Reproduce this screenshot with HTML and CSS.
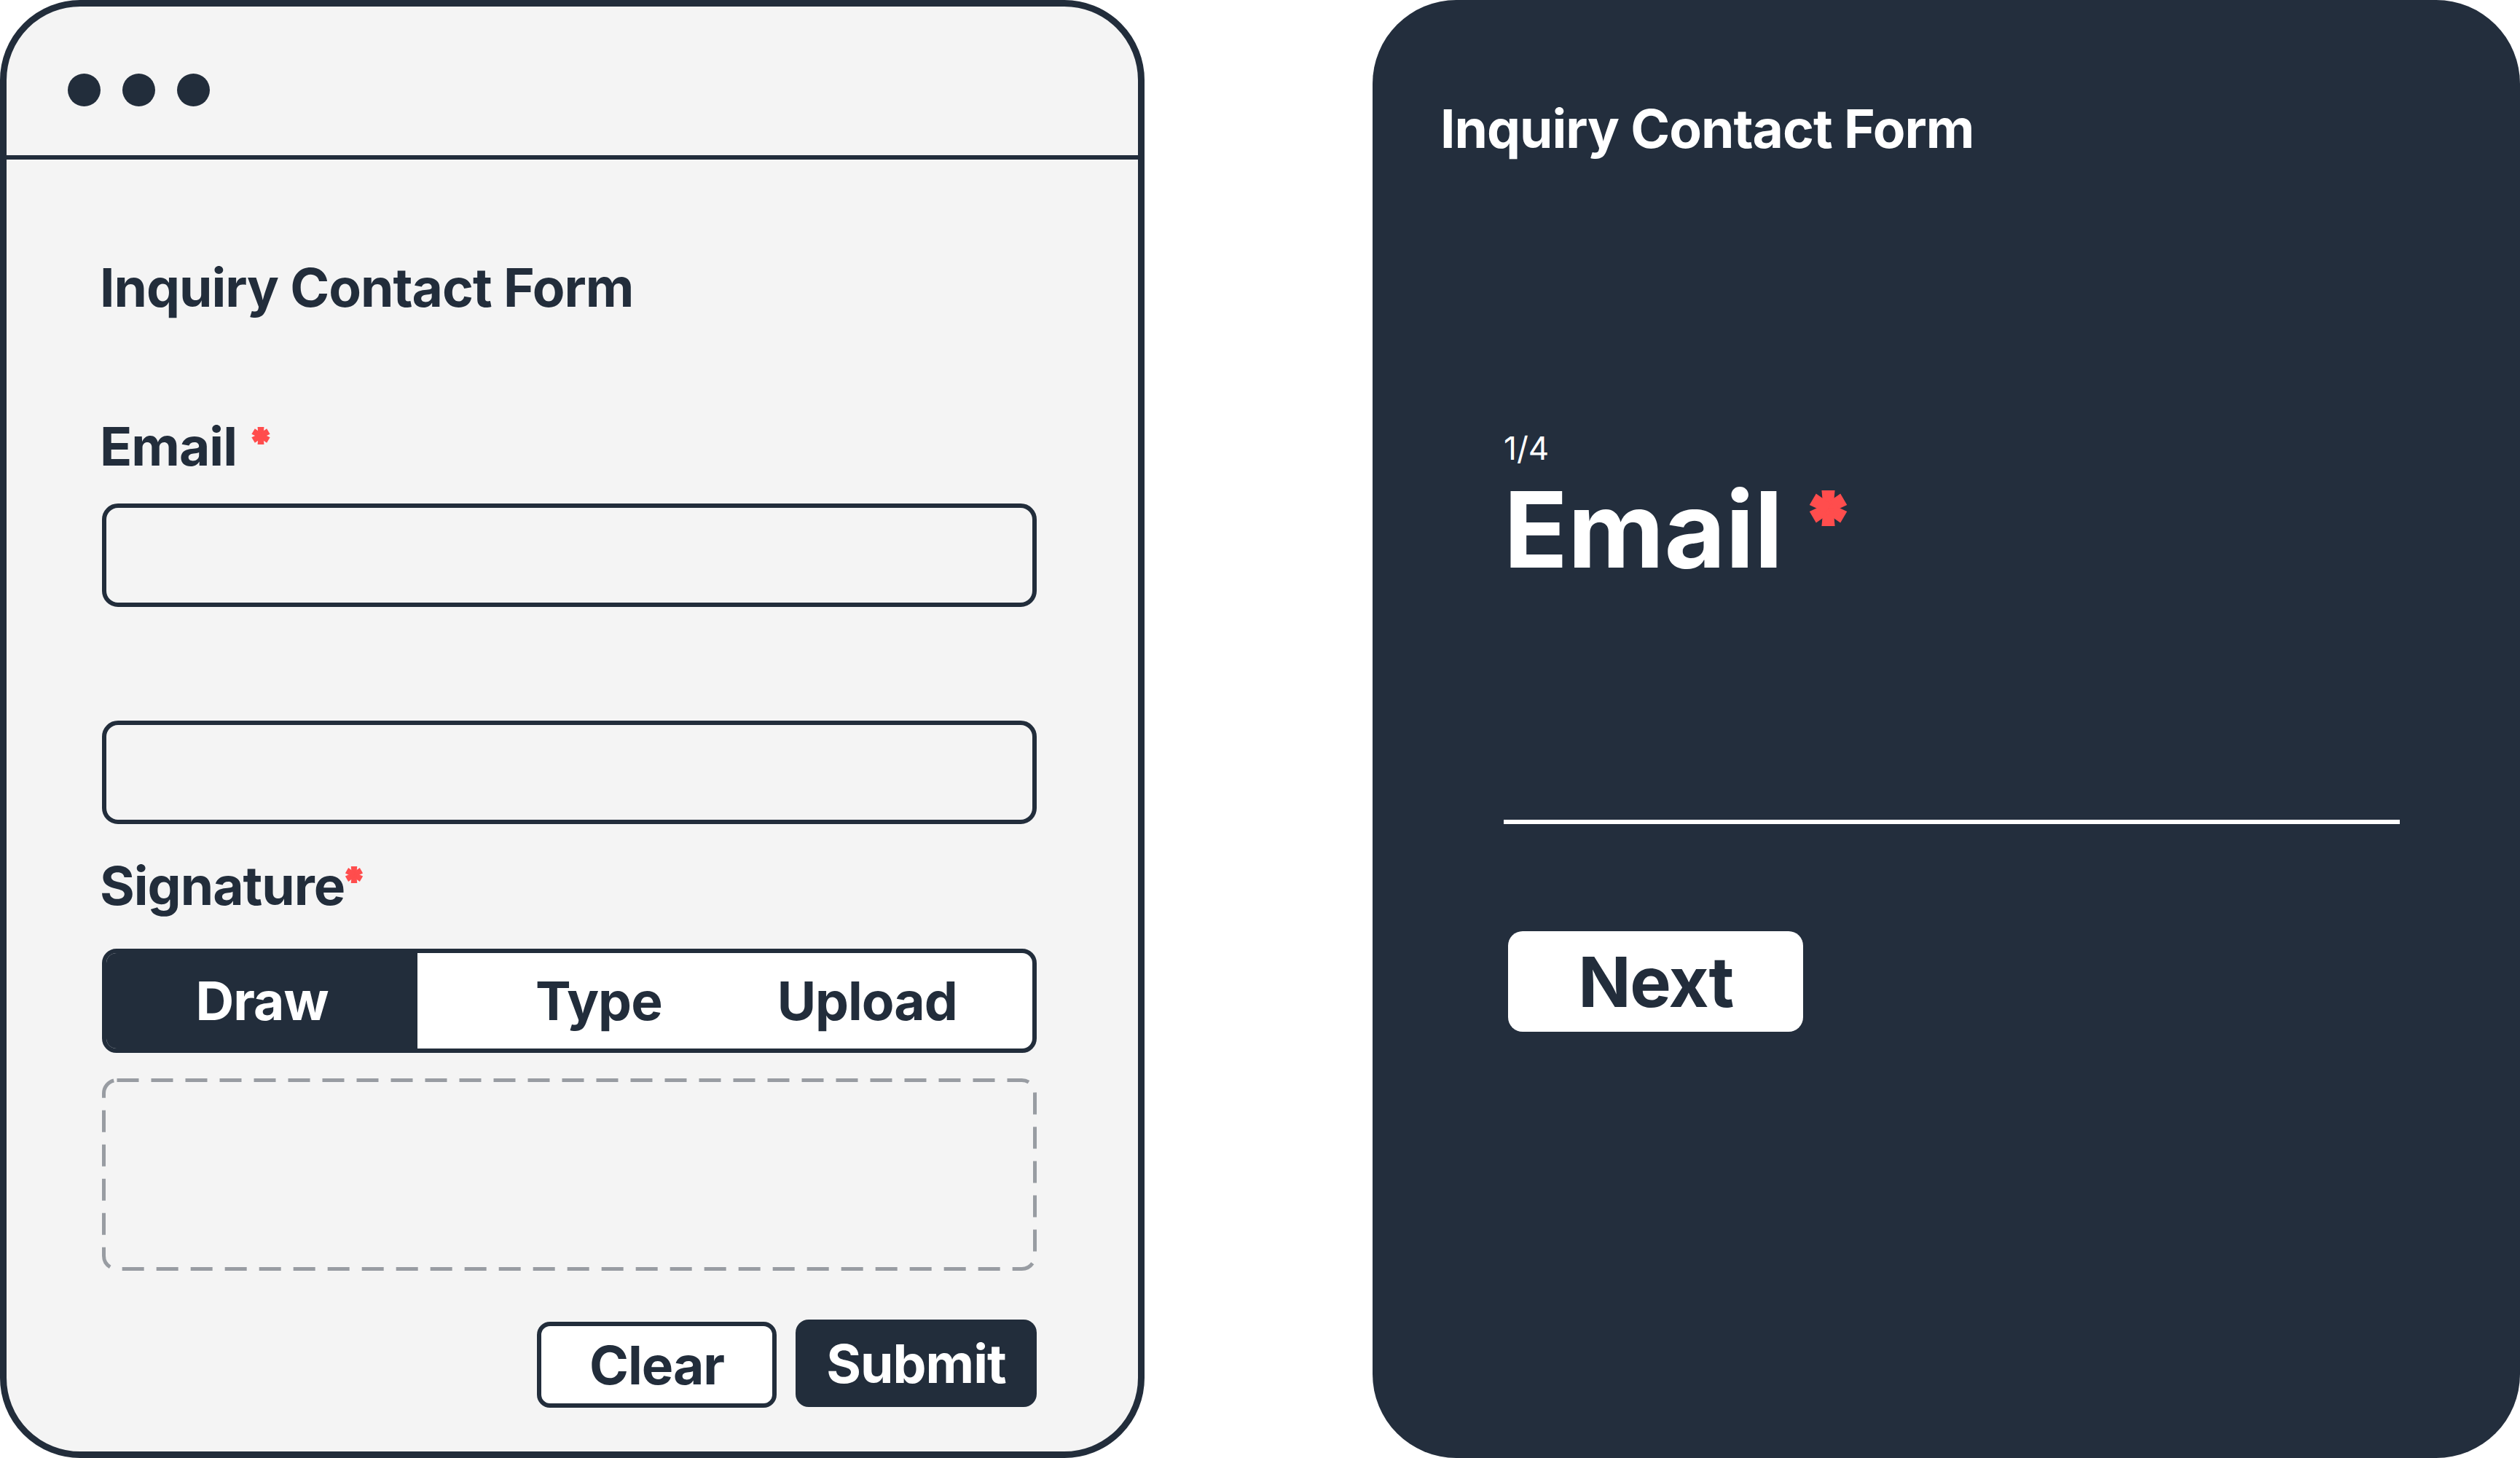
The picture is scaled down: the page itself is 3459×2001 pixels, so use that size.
FILE: index.html
```html
<!DOCTYPE html>
<html lang="en">
<head>
<meta charset="utf-8">
<title>Inquiry Contact Form</title>
<link rel="stylesheet" href="styles.css">
</head>
<body>
<div class="page">
  <section class="window">
    <div class="window-bar">
      <span class="dot"></span><span class="dot"></span><span class="dot"></span>
    </div>
    <div class="window-body">
      <h1 class="form-title">Inquiry Contact Form</h1>
      <div class="label label-email">
        <span class="label-text">Email</span>
        <svg class="req req-gap" viewBox="-3 0 106 100" width="26" height="24" aria-hidden="true"><g fill="#ff4d4d"><polygon points="36,50 64,50 68.5,0 31.5,0"/><polygon points="36,50 64,50 68.5,0 31.5,0" transform="rotate(60 50 50)"/><polygon points="36,50 64,50 68.5,0 31.5,0" transform="rotate(120 50 50)"/><polygon points="36,50 64,50 68.5,0 31.5,0" transform="rotate(180 50 50)"/><polygon points="36,50 64,50 68.5,0 31.5,0" transform="rotate(240 50 50)"/><polygon points="36,50 64,50 68.5,0 31.5,0" transform="rotate(300 50 50)"/></g></svg>
      </div>
      <div class="input input-first"></div>
      <div class="input input-second"></div>
      <div class="label label-sig">
        <span class="label-text">Signature</span>
        <svg class="req" viewBox="-3 0 106 100" width="26" height="23" aria-hidden="true"><g fill="#ff4d4d"><polygon points="36,50 64,50 68.5,0 31.5,0"/><polygon points="36,50 64,50 68.5,0 31.5,0" transform="rotate(60 50 50)"/><polygon points="36,50 64,50 68.5,0 31.5,0" transform="rotate(120 50 50)"/><polygon points="36,50 64,50 68.5,0 31.5,0" transform="rotate(180 50 50)"/><polygon points="36,50 64,50 68.5,0 31.5,0" transform="rotate(240 50 50)"/><polygon points="36,50 64,50 68.5,0 31.5,0" transform="rotate(300 50 50)"/></g></svg>
      </div>
      <div class="tabs">
        <div class="tab tab-active">Draw</div>
        <div class="tab-rest">
          <span class="tab">Type</span>
          <span class="tab">Upload</span>
        </div>
      </div>
      <div class="sig-pad">
        <svg class="sig-pad-svg" width="1283" height="264" viewBox="0 0 1283 264" aria-hidden="true">
          <rect x="2.5" y="2.5" width="1278" height="259" rx="18" ry="18" fill="none" stroke="#989ca2" stroke-width="5" stroke-dasharray="30 17"/>
        </svg>
      </div>
      <div class="actions">
        <button class="btn btn-clear">Clear</button>
        <button class="btn btn-submit">Submit</button>
      </div>
    </div>
  </section>

  <section class="stepper">
    <h1 class="form-title form-title-light">Inquiry Contact Form</h1>
    <div class="step">
      <div class="step-count">1/4</div>
      <div class="step-label">
        <span>Email</span>
        <svg class="req-big" viewBox="-3 0 106 100" width="53" height="49" aria-hidden="true"><g fill="#ff4d4d"><polygon points="36,50 64,50 68.5,0 31.5,0"/><polygon points="36,50 64,50 68.5,0 31.5,0" transform="rotate(60 50 50)"/><polygon points="36,50 64,50 68.5,0 31.5,0" transform="rotate(120 50 50)"/><polygon points="36,50 64,50 68.5,0 31.5,0" transform="rotate(180 50 50)"/><polygon points="36,50 64,50 68.5,0 31.5,0" transform="rotate(240 50 50)"/><polygon points="36,50 64,50 68.5,0 31.5,0" transform="rotate(300 50 50)"/></g></svg>
      </div>
      <div class="step-field"></div>
      <button class="btn-next">Next</button>
    </div>
  </section>
</div>
</body>
</html>
```
FILE: styles.css
```css
* { box-sizing: border-box; }

html, body {
  margin: 0;
  padding: 0;
  background: #ffffff;
}

body {
  font-family: Inter, "Liberation Sans", sans-serif;
  color: #222d3b;
}

.page {
  display: flex;
  gap: 313px;
  width: 3459px;
  height: 2001px;
}

/* ---------- Left: browser window mock ---------- */
.window {
  width: 1571px;
  height: 2001px;
  flex: none;
  background: #f4f4f4;
  border: 9px solid #222d3b;
  border-radius: 110px;
  overflow: hidden;
}

.window-bar {
  height: 210px;
  border-bottom: 6px solid #222d3b;
  display: flex;
  gap: 30px;
  padding: 92px 0 0 84px;
}

.dot {
  width: 45px;
  height: 45px;
  border-radius: 50%;
  background: #222d3b;
}

.window-body {
  padding: 139px 139px 0 131px;
  display: flex;
  flex-direction: column;
}

.form-title {
  margin: 0 0 0 -3px;
  font-size: 73px;
  line-height: 73px;
  font-weight: 700;
  letter-spacing: -1px;
}

.label {
  display: flex;
  align-items: flex-start;
  font-size: 73px;
  line-height: 73px;
  font-weight: 700;
  letter-spacing: -1px;
}

.label-text { margin-left: -3px; }

.label-email { margin-top: 145px; }
.label-sig { margin-top: 48px; }

.req {
  margin-top: 10px;
  flex: none;
}
.req-gap { margin-left: 20px; }

.input {
  height: 142px;
  border: 6px solid #222d3b;
  border-radius: 22px;
  background: #f4f4f4;
}
.input-first { margin-top: 42px; }
.input-second { margin-top: 156px; }

.tabs {
  margin-top: 50px;
  height: 143px;
  border: 6px solid #222d3b;
  border-radius: 20px;
  overflow: hidden;
  background: #ffffff;
  display: flex;
}

.tab {
  font-size: 73px;
  line-height: 73px;
  font-weight: 700;
  letter-spacing: -1px;
}

.tab-active {
  width: 427px;
  background: #222d3b;
  color: #ffffff;
  display: flex;
  align-items: center;
  justify-content: center;
}

.tab-rest {
  flex: 1;
  display: flex;
  align-items: center;
  gap: 158px;
  padding-left: 162px;
}

.sig-pad {
  margin-top: 35px;
  height: 264px;
}
.sig-pad-svg { display: block; }

.actions {
  margin-top: 66px;
  display: flex;
  justify-content: flex-end;
  align-items: center;
  gap: 26px;
}

.btn {
  font-family: Inter, "Liberation Sans", sans-serif;
  font-size: 73px;
  line-height: 73px;
  font-weight: 700;
  letter-spacing: -1px;
  border-radius: 18px;
  padding: 0;
  display: flex;
  align-items: center;
  justify-content: center;
}

.btn-clear {
  width: 329px;
  height: 118px;
  margin-top: 4px;
  background: #ffffff;
  color: #222d3b;
  border: 6px solid #222d3b;
}

.btn-submit {
  width: 331px;
  height: 120px;
  background: #222d3b;
  color: #ffffff;
  border: none;
}

/* ---------- Right: stepper card ---------- */
.stepper {
  flex: 1;
  height: 2001px;
  background: #232e3d;
  border-radius: 115px;
  padding: 140px 0 0 96px;
  color: #ffffff;
}

.form-title-light { color: #ffffff; }

.step {
  margin-left: 84px;
  margin-top: 380px;
  width: 1230px;
}

.step-count {
  font-size: 44px;
  line-height: 44px;
  font-weight: 400;
}

.step-label {
  margin-top: 17px;
  display: flex;
  align-items: flex-start;
  font-size: 145px;
  line-height: 145px;
  font-weight: 700;
  letter-spacing: 0;
}

.req-big {
  margin-left: 36px;
  margin-top: 19px;
  flex: none;
}

.step-field {
  margin-top: 326px;
  height: 6px;
  background: #ffffff;
}

.btn-next {
  margin-top: 147px;
  margin-left: 6px;
  width: 405px;
  height: 138px;
  border: none;
  border-radius: 20px;
  background: #ffffff;
  color: #222d3b;
  font-family: Inter, "Liberation Sans", sans-serif;
  font-size: 95px;
  line-height: 95px;
  font-weight: 700;
  letter-spacing: -1.5px;
  padding: 0;
  display: flex;
  align-items: center;
  justify-content: center;
}
```
